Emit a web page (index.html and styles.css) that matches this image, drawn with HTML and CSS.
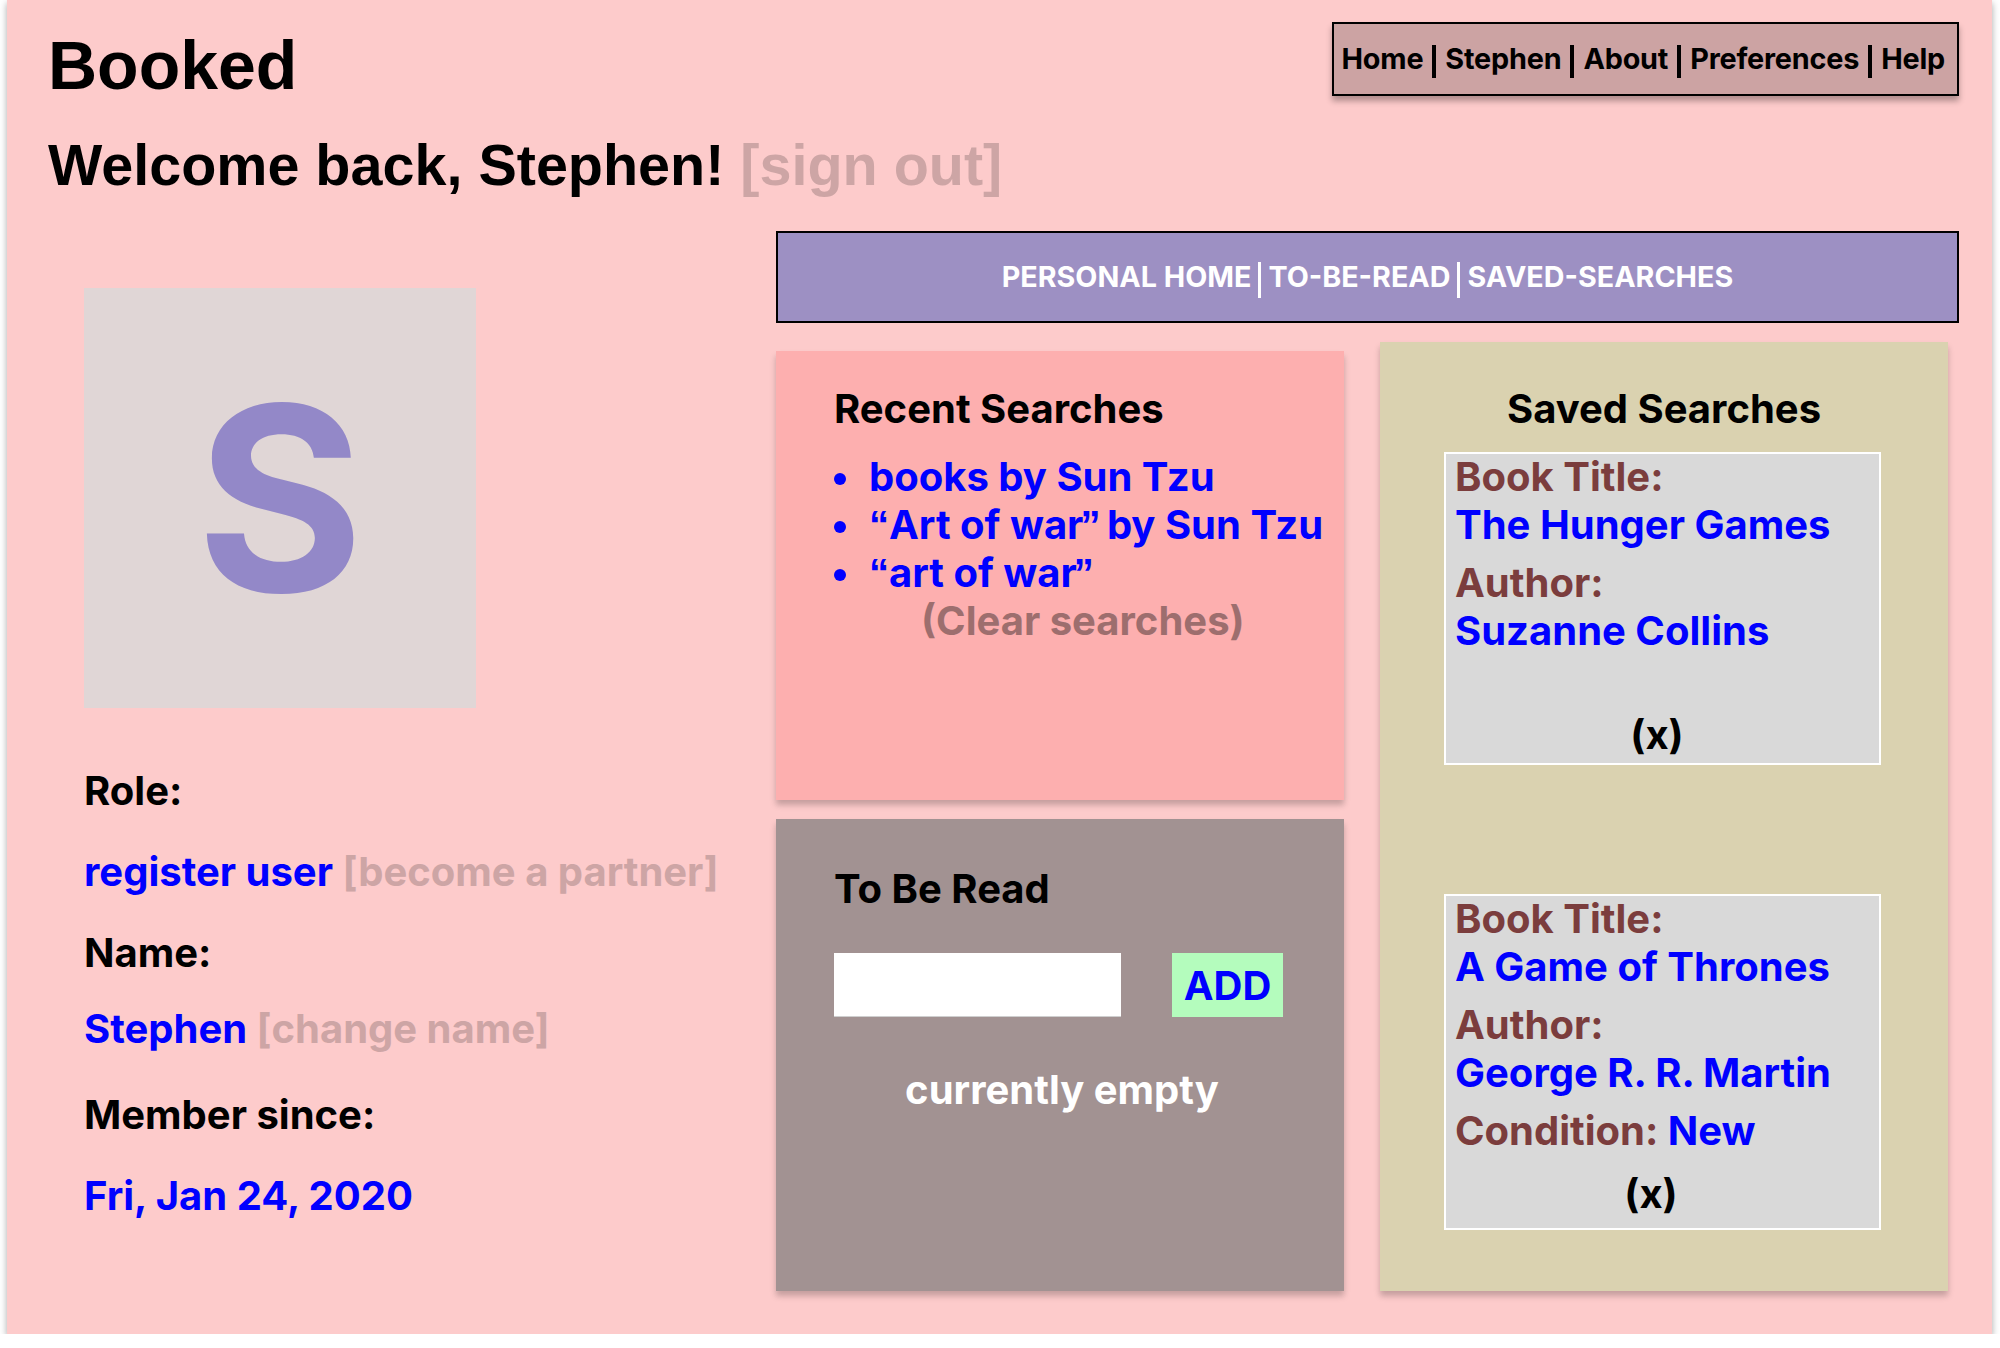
FILE: index.html
```html
<!DOCTYPE html>
<html lang="en">
<head>
<meta charset="utf-8">
<title>Booked</title>
<link rel="stylesheet" href="styles.css">
</head>
<body>
<div class="frame">
  <header class="top">
    <div class="titles">
      <h1 class="brand">Booked</h1>
      <p class="welcome">Welcome back, Stephen! <span class="muted">[sign out]</span></p>
    </div>
    <nav class="topnav">Home<span class="bar"></span>Stephen<span class="bar"></span>About<span class="bar"></span>Preferences<span class="bar"></span>Help</nav>
  </header>
  <main class="main">
    <section class="profile">
      <div class="avatar">S</div>
      <div class="info">
        <div class="label">Role:</div>
        <div class="value"><span class="link">register user</span> <span class="muted">[become a partner]</span></div>
        <div class="label">Name:</div>
        <div class="value"><span class="link">Stephen</span> <span class="muted">[change name]</span></div>
        <div class="label">Member since:</div>
        <div class="value"><span class="link">Fri, Jan 24, 2020</span></div>
      </div>
    </section>
    <section class="dash">
      <nav class="subnav">PERSONAL HOME<span class="thin"></span>TO-BE-READ<span class="thin"></span>SAVED-SEARCHES</nav>
      <div class="panels">
        <div class="stack">
          <div class="panel recent">
            <h2 class="panel-title">Recent Searches</h2>
            <ul class="searches">
              <li>books by Sun Tzu</li>
              <li><span class="q">“</span>Art of war<span class="q q-close">”</span> by Sun Tzu</li>
              <li><span class="q">“</span>art of war<span class="q q-close">”</span></li>
            </ul>
            <div class="clear">(Clear searches)</div>
          </div>
          <div class="panel tbr">
            <h2 class="panel-title">To Be Read</h2>
            <div class="add-row">
              <input class="field" type="text" aria-label="Book to add">
              <button class="add" type="button">ADD</button>
            </div>
            <div class="empty">currently empty</div>
          </div>
        </div>
        <div class="panel saved">
          <h2 class="panel-title centered">Saved Searches</h2>
          <div class="card card-one">
            <div class="pair">
              <div class="key">Book Title:</div>
              <div class="val">The Hunger Games</div>
            </div>
            <div class="pair">
              <div class="key">Author:</div>
              <div class="val">Suzanne Collins</div>
            </div>
            <div class="remove">(x)</div>
          </div>
          <div class="card card-two">
            <div class="pair">
              <div class="key">Book Title:</div>
              <div class="val">A Game of Thrones</div>
            </div>
            <div class="pair">
              <div class="key">Author:</div>
              <div class="val">George R. R. Martin</div>
            </div>
            <div class="pair">
              <div class="key">Condition: <span class="val-inline">New</span></div>
            </div>
            <div class="remove">(x)</div>
          </div>
        </div>
      </div>
    </section>
  </main>
</div>
</body>
</html>
```

FILE: styles.css
```css
* { box-sizing: border-box; }

html, body {
  margin: 0;
  padding: 0;
  background: #ffffff;
}

body {
  font-family: Inter, "Noto Sans", sans-serif;
  font-weight: 700;
  color: #000;
}

.frame {
  width: 1985px;
  height: 1334px;
  margin-left: 7px;
  background: #fdcbcb;
  box-shadow: 0 3px 7px rgba(0, 0, 0, 0.35);
  padding: 0 33px 0 41px;
  display: flex;
  flex-direction: column;
}

/* header */
.top {
  display: flex;
  justify-content: space-between;
  align-items: flex-start;
}

.brand {
  margin: 31px 0 0;
  font-family: "Liberation Sans", Arial, sans-serif;
  font-size: 68px;
  line-height: 68px;
  font-weight: 700;
}

.welcome {
  margin: 38px 0 0;
  font-family: "Liberation Sans", Arial, sans-serif;
  font-size: 57.5px;
  line-height: 57px;
  font-weight: 700;
}

.muted { color: #cda5a5; }
.link { color: #0000ff; }

.topnav {
  margin-top: 22px;
  height: 74px;
  border: 2px solid #000;
  background: #cca3a3;
  box-shadow: 0 5px 6px rgba(0, 0, 0, 0.3);
  font-size: 28.8px;
  line-height: 70px;
  padding: 0 12px 0 8px;
  display: flex;
  align-items: center;
  letter-spacing: -0.2px;
}

.bar {
  display: inline-block;
  width: 4px;
  height: 33px;
  background: #000;
  margin: 4px 9px 0;
}

/* main */
.main {
  margin-top: 37px;
  display: flex;
}

.profile {
  width: 728px;
  padding: 57px 0 0 36px;
}

.avatar {
  width: 392px;
  height: 420px;
  background: #e0d6d6;
  color: #9388c8;
  font-size: 256px;
  line-height: 420px;
  text-align: center;
  font-weight: 700;
}

.info {
  margin-top: 59px;
  font-size: 40px;
  line-height: 48px;
}

.info > div:nth-child(2) { margin-top: 33px; }
.info > div:nth-child(3) { margin-top: 33px; }
.info > div:nth-child(4) { margin-top: 28px; }
.info > div:nth-child(5) { margin-top: 38px; }
.info > div:nth-child(6) { margin-top: 33px; }

/* dashboard */
.dash {
  width: 1183px;
}

.subnav {
  height: 92px;
  border: 2px solid #000;
  background: #9d90c3;
  color: #fff;
  font-size: 28.7px;
  line-height: 88px;
  display: flex;
  justify-content: center;
  align-items: center;
}

.thin {
  display: inline-block;
  width: 3px;
  height: 36px;
  background: #fff;
  margin: 6px 7px 0;
}

.panels {
  display: flex;
  align-items: flex-start;
  gap: 36px;
}

.stack {
  width: 568px;
  margin-top: 28px;
  display: flex;
  flex-direction: column;
  gap: 19px;
}

.panel {
  box-shadow: 0 5px 6px rgba(0, 0, 0, 0.22);
}

.panel-title {
  margin: 0;
  font-size: 40px;
  line-height: 48px;
  font-weight: 700;
}

.centered { text-align: center; }

.recent {
  height: 449px;
  background: #fdafaf;
  padding: 34px 0 0 58px;
}

.searches {
  list-style: none;
  margin: 20px 0 0;
  padding: 0;
  font-size: 40px;
  line-height: 48px;
  color: #0000ff;
}

.searches li {
  display: flex;
  align-items: center;
  white-space: pre;
}

.searches li::before {
  content: "";
  width: 12px;
  height: 12px;
  border-radius: 50%;
  background: #0000ff;
  margin: 4px 23px 0 0;
  flex: none;
}

.q { font-family: "Liberation Sans", Arial, sans-serif; }
.q-close { margin-left: -3px; margin-right: -3px; }

.clear {
  padding-left: 87px;
  font-size: 40px;
  line-height: 48px;
  color: #9d6e6e;
}

.tbr {
  height: 472px;
  background: #a29292;
  padding: 46px 0 0 58px;
}

.add-row {
  margin-top: 40px;
  display: flex;
  gap: 51px;
}

.field {
  width: 287px;
  height: 64px;
  border: none;
  border-bottom: 1px solid #cfcfcf;
  background: #fff;
  padding: 0;
  margin: 0;
}

.add {
  width: 111px;
  height: 64px;
  border: none;
  margin: 0;
  padding: 0;
  background: #b4fcbd;
  color: #0000ff;
  font-family: Inter, "Noto Sans", sans-serif;
  font-weight: 700;
  font-size: 40px;
}

.empty {
  margin: 49px 0 0 -58px;
  padding-left: 4px;
  text-align: center;
  color: #fff;
  font-size: 40px;
  line-height: 48px;
}

.saved {
  width: 568px;
  height: 949px;
  margin-top: 19px;
  background: #dad2b0;
  padding-top: 43px;
}

.card {
  width: 437px;
  margin: 19px 0 0 64px;
  background: #d9d9d9;
  border: 2px solid #fff;
  padding: 0 0 0 9px;
  display: flex;
  flex-direction: column;
  font-size: 40px;
  line-height: 48px;
}

.card-one { height: 313px; padding-bottom: 4px; }
.card-two { height: 336px; margin-top: 129px; padding-bottom: 10px; }

.pair:first-child { margin-top: -1px; }
.pair + .pair { margin-top: 10px; }

.key { color: #7b3d3d; }
.val, .val-inline { color: #0000ff; }

.remove {
  margin-top: auto;
  text-align: center;
  padding-right: 20px;
}

.card-two .remove { padding-right: 32px; }
```
